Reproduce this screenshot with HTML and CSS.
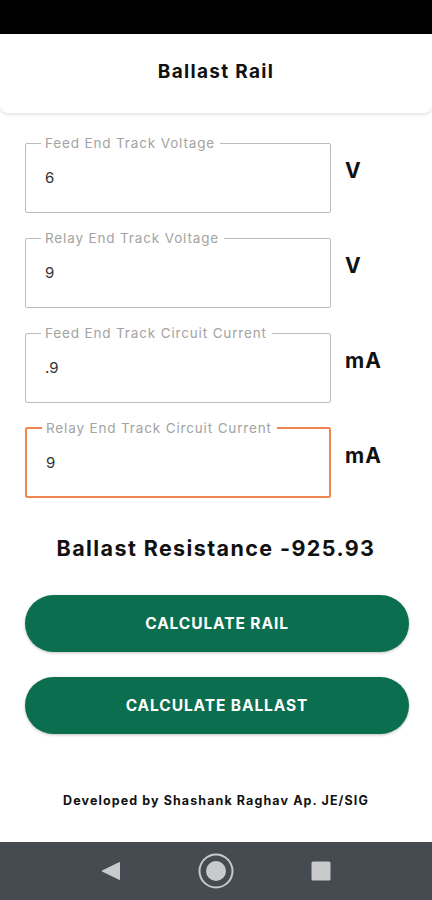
FILE: index.html
```html
<!DOCTYPE html>
<html>
<head>
<meta charset="utf-8">
<link rel="stylesheet" href="styles.css">
</head>
<body>
<div class="screen">
  <div class="statusbar"></div>
  <header class="appbar"><h1 class="title">Ballast Rail</h1></header>
  <main class="content">
    <div class="row">
      <fieldset class="field"><legend class="label">Feed End Track Voltage</legend><span class="value">6</span></fieldset>
      <span class="unit">V</span>
    </div>
    <div class="row">
      <fieldset class="field"><legend class="label">Relay End Track Voltage</legend><span class="value">9</span></fieldset>
      <span class="unit">V</span>
    </div>
    <div class="row">
      <fieldset class="field"><legend class="label">Feed End Track Circuit Current</legend><span class="value">.9</span></fieldset>
      <span class="unit">mA</span>
    </div>
    <div class="row">
      <fieldset class="field focused"><legend class="label">Relay End Track Circuit Current</legend><span class="value">9</span></fieldset>
      <span class="unit">mA</span>
    </div>
    <p class="result">Ballast Resistance -925.93</p>
    <button class="btn">CALCULATE RAIL</button>
    <button class="btn">CALCULATE BALLAST</button>
    <p class="credit">Developed by Shashank Raghav Ap. JE/SIG</p>
  </main>
  <nav class="navbar">
    <svg class="nav-icon" width="24" height="24" viewBox="0 0 24 24"><path d="M20.5 3.5 L20.5 20.5 L3 12 Z" fill="#c8cacb" stroke="#c8cacb" stroke-width="1" stroke-linejoin="round"/></svg>
    <svg class="nav-icon" width="36" height="36" viewBox="0 0 36 36"><circle cx="18" cy="18" r="16.5" fill="none" stroke="#c8cacb" stroke-width="2"/><circle cx="18" cy="18" r="10" fill="#c8cacb"/></svg>
    <svg class="nav-icon" width="24" height="24" viewBox="0 0 24 24"><rect x="2.5" y="2.5" width="19" height="19" rx="1.5" fill="#c8cacb"/></svg>
  </nav>
</div>
</body>
</html>
```
FILE: styles.css
```css
* { box-sizing: border-box; }
html, body { margin: 0; padding: 0; }
body {
  width: 432px;
  height: 900px;
  background: #ffffff;
  font-family: "Inter", "Noto Sans", "Liberation Sans", sans-serif;
  color: #111;
  overflow: hidden;
}
.screen { display: flex; flex-direction: column; height: 900px; }
.statusbar { height: 34px; background: #000; flex: none; }
.appbar {
  height: 79px;
  flex: none;
  background: #fff;
  border-radius: 0 0 8px 8px;
  box-shadow: 0 2px 3px rgba(0,0,0,0.10);
  display: flex;
  align-items: center;
  justify-content: center;
}
.title { margin: 0 0 4px; font-size: 19px; font-weight: 700; color: #111; letter-spacing: 1.3px; }
.content {
  flex: 1;
  display: flex;
  flex-direction: column;
  padding: 22px 0 0 25px;
}
.row { display: flex; align-items: center; margin-bottom: 17px; }
.field {
  width: 306px;
  height: 78px;
  margin: 0;
  padding: 0 0 0 19px;
  border: 1.5px solid #bdbdbd;
  border-radius: 2px;
  display: flex;
  flex-direction: column;
  justify-content: flex-start;
}
.field.focused { border: 2px solid #ef8652; }
.label {
  font-size: 13.5px;
  color: #a3a3a3;
  padding: 0 5px 0 4px;
  margin-left: -4px;
  line-height: 16px;
  letter-spacing: 0.85px;
}
.value { font-size: 15px; color: #333; margin-top: 17px; line-height: 20px; }
.unit {
  margin-left: 14px;
  margin-top: -8px;
  font-size: 21px;
  font-weight: 700;
  color: #111;
  letter-spacing: 1px;
}
.result {
  margin: 18px 0 0 -25px;
  text-align: center;
  font-size: 21.5px;
  font-weight: 700;
  color: #111;
  line-height: 30px;
  letter-spacing: 1.4px;
}
.btn {
  width: 384px;
  height: 57px;
  border: none;
  border-radius: 29px;
  background: #0b6e4f;
  color: #fff;
  font-family: inherit;
  font-size: 15.5px;
  font-weight: 700;
  letter-spacing: 0.9px;
  box-shadow: 0 1px 3px rgba(0,0,0,0.25);
  flex: none;
}
.btn:first-of-type { margin-top: 32px; }
.btn + .btn { margin-top: 25px; }
.credit {
  margin: 59px 0 0 -25px;
  text-align: center;
  font-size: 12.5px;
  font-weight: 700;
  color: #111;
  letter-spacing: 1.1px;
}
.navbar {
  height: 58px;
  flex: none;
  background: #454b50;
  display: flex;
  align-items: center;
  justify-content: center;
  gap: 75px;
}
```
